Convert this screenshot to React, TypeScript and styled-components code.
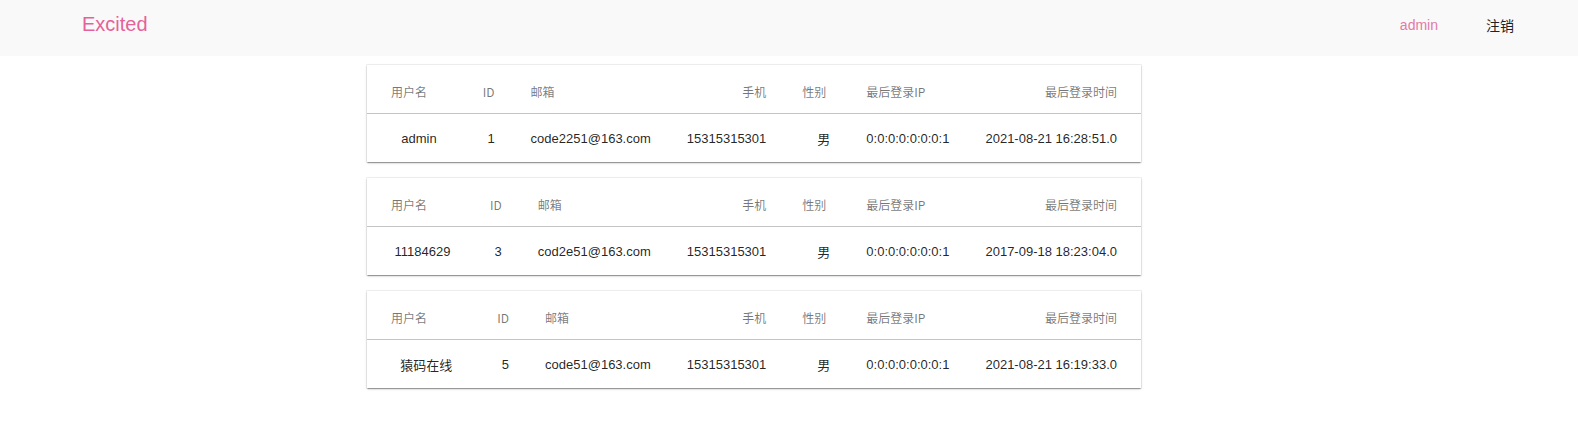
import React from 'react';
import styled, { createGlobalStyle } from 'styled-components';

const GlobalStyle = createGlobalStyle`
  html, body {
    margin: 0;
    padding: 0;
    background: #ffffff;
  }
  body {
    font-family: "Liberation Sans", "Noto Sans CJK SC", Arial, sans-serif;
    -webkit-font-smoothing: antialiased;
  }
`;

const TopBar = styled.header`
  height: 56px;
  display: flex;
  align-items: center;
  padding: 0 64px 0 82px;
  background: #f9f9f9;
  box-sizing: border-box;
`;

const Brand = styled.div`
  font-size: 20px;
  color: #e5619a;
  padding-bottom: 7px;
`;

const Nav = styled.nav`
  margin-left: auto;
  display: flex;
  align-items: center;
  gap: 48px;
  padding-bottom: 6px;
`;

const NavLink = styled.a<{ $accent?: boolean }>`
  font-size: 14px;
  color: ${(p) => (p.$accent ? '#e27aa7' : '#222222')};
  text-decoration: none;
  cursor: pointer;
`;

const Main = styled.main`
  display: flex;
  flex-direction: column;
  gap: 16px;
  padding: 9px 0 24px 367px;
`;

const Card = styled.section`
  width: 774px;
  background: #ffffff;
  box-shadow: 0 0 0 1px rgba(0, 0, 0, 0.05), 0 2px 1px -1px rgba(0, 0, 0, 0.2),
    0 1px 1px 0 rgba(0, 0, 0, 0.14), 0 1px 3px 0 rgba(0, 0, 0, 0.12);
`;

const Table = styled.table`
  width: 100%;
  border-collapse: collapse;
  border-spacing: 0;
`;

const HeadRow = styled.tr`
  border-bottom: 1px solid rgba(0, 0, 0, 0.12);
`;

type Align = 'left' | 'right' | 'center';

const Th = styled.th<{ $align: Align; $w: string }>`
  height: 42px;
  padding: 6px 18px 0;
  width: ${(p) => p.$w};
  text-align: ${(p) => p.$align};
  font-family: "Noto Sans CJK SC", "Liberation Sans", sans-serif;
  font-size: 12px;
  font-weight: 400;
  line-height: 16px;
  color: rgba(0, 0, 0, 0.54);
  white-space: nowrap;
  vertical-align: middle;

  &:first-child {
    padding-left: 24px;
  }
  &:last-child {
    padding-right: 24px;
  }
`;

const Td = styled.td<{ $align: Align; $w: string }>`
  height: 48px;
  padding: 0 18px;
  width: ${(p) => p.$w};
  text-align: ${(p) => p.$align};
  font-size: 13px;
  color: rgba(0, 0, 0, 0.87);
  white-space: nowrap;
  vertical-align: middle;

  &:first-child {
    padding-left: 24px;
  }
  &:last-child {
    padding-right: 24px;
  }
`;

type User = {
  username: string;
  id: number;
  email: string;
  phone: string;
  gender: string;
  ip: string;
  lastLogin: string;
};

type Column = {
  key: keyof User;
  label: string;
  head: Align;
  cell: Align;
  width: string;
};

const columns: Column[] = [
  { key: 'username', label: '用户名', head: 'left', cell: 'center', width: 'auto' },
  { key: 'id', label: 'ID', head: 'right', cell: 'right', width: '1px' },
  { key: 'email', label: '邮箱', head: 'left', cell: 'left', width: '1px' },
  { key: 'phone', label: '手机', head: 'right', cell: 'right', width: '1px' },
  { key: 'gender', label: '性别', head: 'left', cell: 'right', width: '28px' },
  { key: 'ip', label: '最后登录IP', head: 'left', cell: 'left', width: '1px' },
  { key: 'lastLogin', label: '最后登录时间', head: 'right', cell: 'right', width: '1px' },
];

const users: User[] = [
  {
    username: 'admin',
    id: 1,
    email: 'code2251@163.com',
    phone: '15315315301',
    gender: '男',
    ip: '0:0:0:0:0:0:0:1',
    lastLogin: '2021-08-21 16:28:51.0',
  },
  {
    username: '11184629',
    id: 3,
    email: 'cod2e51@163.com',
    phone: '15315315301',
    gender: '男',
    ip: '0:0:0:0:0:0:0:1',
    lastLogin: '2017-09-18 18:23:04.0',
  },
  {
    username: '猿码在线',
    id: 5,
    email: 'code51@163.com',
    phone: '15315315301',
    gender: '男',
    ip: '0:0:0:0:0:0:0:1',
    lastLogin: '2021-08-21 16:19:33.0',
  },
];

const UserCard: React.FC<{ user: User }> = ({ user }) => (
  <Card>
    <Table>
      <thead>
        <HeadRow>
          {columns.map((c) => (
            <Th key={c.key} $align={c.head} $w={c.width}>
              {c.label}
            </Th>
          ))}
        </HeadRow>
      </thead>
      <tbody>
        <tr>
          {columns.map((c) => (
            <Td key={c.key} $align={c.cell} $w={c.width}>
              {user[c.key]}
            </Td>
          ))}
        </tr>
      </tbody>
    </Table>
  </Card>
);

const App: React.FC = () => (
  <>
    <GlobalStyle />
    <TopBar>
      <Brand>Excited</Brand>
      <Nav>
        <NavLink $accent>admin</NavLink>
        <NavLink>注销</NavLink>
      </Nav>
    </TopBar>
    <Main>
      {users.map((u) => (
        <UserCard key={u.id} user={u} />
      ))}
    </Main>
  </>
);

export default App;
